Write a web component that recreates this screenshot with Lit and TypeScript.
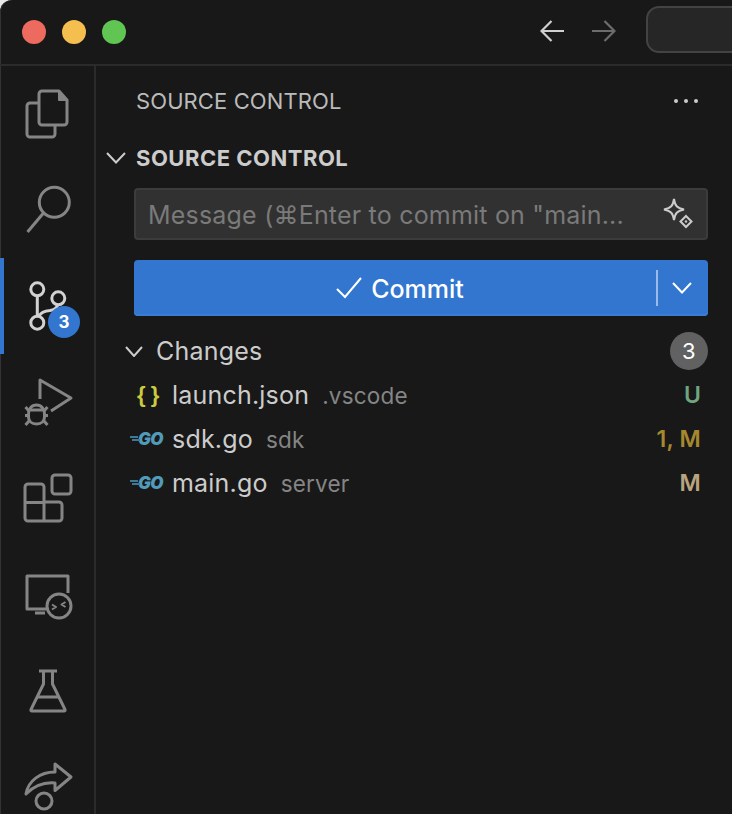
import { LitElement, html, css, svg } from "lit";
import { customElement } from "lit/decorators.js";

const icons = [
  svg`<path d="M15 14H6a3 3 0 0 0-3 3v28a3 3 0 0 0 3 3h22a3 3 0 0 0 3-3v-8" /><path d="M18 2h17l8 9v22a3 3 0 0 1-3 3H18a3 3 0 0 1-3-3V5a3 3 0 0 1 3-3z" /><path d="M35 2v9h8" fill="currentColor" stroke-width="2"/>`,
  svg`<circle cx="30.300" cy="17.300" r="15"/><path d="M19.500 28 3.500 47"/>`,
  svg`<circle cx="13.300" cy="8.300" r="6.500"/><circle cx="34.300" cy="17.300" r="6.500"/><circle cx="13.300" cy="41.700" r="6.500"/><path d="M13.300 15v20M15 35c2-4 6-5 11-5.500 4-.5 7-3 8-6"/>`,
  svg`<path d="M16 22V3l31 18-20 13"/><path d="M6 33h13M4.500 37c0-5 3-9 8-9s8 4 8 9v3c0 4-3 7-8 7s-8-3-8-7z" /><path d="M5 34L1.500 30M20 34l3.500-4M4 38.500H1M21 38.500h3M5 44l-3.500 4M20 44l3.500 4"/>`,
  svg`<rect x="28" y="2" width="19" height="19" rx="3"/><path d="M4 11h13a3 3 0 0 1 3 3v15h15a3 3 0 0 1 3 3v13a3 3 0 0 1-3 3H4a3 3 0 0 1-3-3V14a3 3 0 0 1 3-3z"/><path d="M1 29.500h19V48"/>`,
  svg`<path d="M44 24V7H3v33h19M11 44h10" /><circle cx="35" cy="37" r="12"/><path d="M28 35.500l4 2.500-4 2.500M41.500 33l-4 2.500 4 2.500" stroke-width="2"/>`,
  svg`<path d="M15 6h18M19.500 6v13L7 44.500q-.5 1.500 1 1.500h32q1.500 0 1-1.500L28.500 19V6M13 32h22"/>`,
  svg`<path d="M2 33C4 20 16 11 31 11V3l16 13-16 13.500V22C20 21 10 25 2 33z"/><circle cx="20" cy="40" r="8"/>`,
];

@customElement("app-root")
export class AppRoot extends LitElement {
  static styles = css`
    :host {
      display: block;
      width: 732px;
      height: 814px;
      overflow: hidden;
      background: #e8e8e8;
      font-family: Inter, "Liberation Sans", sans-serif;
      color: #cccccc;
    }
    .window {
      height: 814px;
      background: #181818;
      border-top-left-radius: 12px;
      overflow: hidden;
      display: flex;
      flex-direction: column;
      box-shadow: inset 1px 0 0 #333333;
    }
    .titlebar {
      height: 64px;
      flex: none;
      border-bottom: 2px solid #2b2b2b;
      display: flex;
      align-items: center;
      padding-left: 22px;
    }
    .light {
      width: 24px;
      height: 24px;
      flex: none;
      border-radius: 50%;
      margin-right: 16px;
    }
    .red { background: #ed6a5f; }
    .yellow { background: #f5bf4f; }
    .green { background: #61c554; }
    .nav {
      display: flex;
      flex: none;
      gap: 28px;
      margin-left: 398px;
      margin-top: -2px;
    }
    .nav svg { display: block; }
    .search {
      width: 120px;
      height: 43px;
      margin-left: 30px;
      flex: none;
      border: 2px solid #434343;
      border-radius: 13px;
      background: #262626;
      margin-top: -5px;
    }
    .body {
      flex: 1;
      display: flex;
      min-height: 0;
    }
    .activity {
      width: 94px;
      flex: none;
      border-right: 2px solid #2b2b2b;
    }
    .item {
      position: relative;
      height: 96px;
      display: flex;
      align-items: center;
      justify-content: center;
      color: #858585;
    }
    .item.active { color: #d2d2d2; }
    .item.active::before {
      content: "";
      position: absolute;
      left: 0;
      top: 0;
      bottom: 0;
      width: 4px;
      background: #3276cf;
    }
    .item svg {
      width: 48px;
      height: 48px;
      overflow: visible;
      fill: none;
      stroke: currentColor;
      stroke-width: 3;
      stroke-linejoin: round;
    }
    .badge {
      position: absolute;
      left: 48px;
      top: 48px;
      width: 32px;
      height: 32px;
      border-radius: 50%;
      background: #3276cf;
      color: #fff;
      font-size: 17px;
      font-weight: 700;
      display: flex;
      align-items: center;
      justify-content: center;
    }
    .side {
      flex: 1;
      min-width: 0;
    }
    .viewhead {
      height: 70px;
      padding: 0 24px 0 40px;
      display: flex;
      align-items: center;
      justify-content: space-between;
      font-size: 22px;
      letter-spacing: 0.1px;
      color: #bbbbbb;
    }
    .dots {
      display: flex;
      gap: 6px;
      margin-right: 10px;
    }
    .dots i {
      width: 4px;
      height: 4px;
      border-radius: 50%;
      background: #cccccc;
    }
    .section {
      height: 44px;
      display: flex;
      align-items: center;
      padding-left: 10px;
      font-size: 22px;
      font-weight: 700;
      letter-spacing: 0.5px;
      gap: 10px;
    }
    .chev {
      flex: none;
      fill: none;
      stroke: currentColor;
      stroke-width: 2;
    }
    .input {
      margin: 8px 24px 0 38px;
      height: 52px;
      box-sizing: border-box;
      background: #313131;
      border: 2px solid #3c3c3c;
      border-radius: 4px;
      display: flex;
      align-items: center;
      justify-content: space-between;
      padding: 0 12px;
      font-size: 25px;
      letter-spacing: 0.2px;
      color: #7a7a7a;
      white-space: nowrap;
    }
    .input span { padding-top: 2px; }
    .input svg {
      fill: none;
      stroke: #cccccc;
      stroke-width: 2;
      flex: none;
    }
    .commit {
      margin: 20px 24px 0 38px;
      height: 56px;
      background: #3276cf;
      border-radius: 4px;
      display: flex;
      align-items: center;
      color: #ffffff;
      font-size: 25px;
      font-weight: 500;
      box-shadow: inset 0 -2px 0 #3a7dd4;
    }
    .commit-main {
      flex: 1;
      display: flex;
      align-items: center;
      justify-content: center;
      gap: 9px;
      padding-left: 10px;
    }
    .commit-main span { padding-top: 2px; }
    .commit-main svg {
      fill: none;
      stroke: #fff;
      stroke-width: 2;
    }
    .divider {
      width: 2px;
      height: 36px;
      background: #9bbce8;
    }
    .caret {
      width: 50px;
      display: flex;
      justify-content: center;
      padding-right: 2px;
      box-sizing: border-box;
    }
    .caret svg {
      fill: none;
      stroke: #fff;
      stroke-width: 2;
    }
    .row {
      height: 44px;
      display: flex;
      align-items: center;
      font-size: 25px;
      letter-spacing: 0.2px;
      padding-right: 31px;
      white-space: nowrap;
    }
    .changes {
      margin-top: 13px;
      padding-left: 29px;
      padding-right: 24px;
      gap: 13px;
    }
    .count {
      margin-left: auto;
      width: 38px;
      height: 38px;
      border-radius: 50%;
      background: #616161;
      color: #fff;
      font-size: 22px;
      display: flex;
      align-items: center;
      justify-content: center;
    }
    .file {
      padding-left: 34px;
    }
    .ficon {
      width: 42px;
      box-sizing: border-box;
      flex: none;
      display: flex;
      align-items: center;
      height: 30px;
      position: relative;
    }
    .json {
      color: #cbcb41;
      font-family: "Liberation Sans", sans-serif;
      font-weight: 700;
      font-size: 22px;
      letter-spacing: -0.5px;
      padding-left: 7px;
    }
    .go {
      color: #519aba;
      font-weight: 900;
      font-style: italic;
      font-size: 17px;
      letter-spacing: -0.5px;
      padding-left: 8px;
    }
    .go::before {
      content: "";
      position: absolute;
      left: 0;
      top: 12px;
      width: 8px;
      height: 2px;
      background: #3f7a94;
      box-shadow: 2px 3px 0 #3f7a94;
    }
    .desc {
      font-size: 22.500px;
      color: #858585;
      margin-left: 13px;
    }
    .status {
      margin-left: auto;
      font-size: 23px;
      font-weight: 600;
    }
    .u { color: #6fa67f; }
    .w { color: #a6892f; }
    .m { color: #b8a47f; }
  `;

  render() {
    return html`
      <div class="window">
        <div class="titlebar">
          <div class="light red"></div>
          <div class="light yellow"></div>
          <div class="light green"></div>
          <div class="nav">
            <svg width="24" height="24" viewBox="0 0 24 24" fill="none" stroke="#cfcfcf" stroke-width="2.200"><path d="M24 12H1.500M11.500 2 1.500 12l10 10"/></svg>
            <svg width="24" height="24" viewBox="0 0 24 24" fill="none" stroke="#6c6c6c" stroke-width="2.200"><path d="M0 12h22.500M12.500 2l10 10-10 10"/></svg>
          </div>
          <div class="search"></div>
        </div>
        <div class="body">
          <div class="activity">
            ${icons.map(
              (p, i) => html`
                <div class="item ${i === 2 ? "active" : ""}">
                  <svg viewBox="-1 1 48 48">${p}</svg>
                  ${i === 2 ? html`<span class="badge">3</span>` : ""}
                </div>
              `
            )}
          </div>
          <div class="side">
            <div class="viewhead">
              <span>SOURCE CONTROL</span>
              <span class="dots"><i></i><i></i><i></i></span>
            </div>
            <div class="section">
              <svg class="chev" width="20" height="12" viewBox="0 0 20 12"><path d="M1 1l9 9.500L19 1"/></svg>
              <span>SOURCE CONTROL</span>
            </div>
            <div class="input">
              <span>Message (⌘Enter to commit on "main...</span>
              <svg width="32" height="32" viewBox="0 0 32 32">
                <path d="M12 1c1 7 3 9 10 10.500-7 1.500-9 3.500-10 10.500-1-7-3-9-10-10.500 7-1.500 9-3.500 10-10.500z"/>
                <path d="M24 18l5.500 5.500-5.500 5.500-5.500-5.500z"/>
                <circle cx="24" cy="23.500" r="1.200" fill="#cccccc" stroke="none"/>
              </svg>
            </div>
            <div class="commit">
              <div class="commit-main">
                <svg width="26" height="22" viewBox="0 0 26 22"><path d="M1 12l8 8L25 1"/></svg>
                <span>Commit</span>
              </div>
              <div class="divider"></div>
              <div class="caret">
                <svg width="20" height="12" viewBox="0 0 20 12"><path d="M1 1l9 9.500L19 1"/></svg>
              </div>
            </div>
            <div class="row changes">
              <svg class="chev" width="18" height="11" viewBox="0 0 18 11"><path d="M1 1l8 9 8-9"/></svg>
              <span>Changes</span>
              <span class="count">3</span>
            </div>
            <div class="row file">
              <span class="ficon json">{ }</span>
              <span>launch.json</span><span class="desc">.vscode</span>
              <span class="status u">U</span>
            </div>
            <div class="row file">
              <span class="ficon go">GO</span>
              <span>sdk.go</span><span class="desc">sdk</span>
              <span class="status w">1, M</span>
            </div>
            <div class="row file">
              <span class="ficon go">GO</span>
              <span>main.go</span><span class="desc">server</span>
              <span class="status m">M</span>
            </div>
          </div>
        </div>
      </div>
    `;
  }
}
